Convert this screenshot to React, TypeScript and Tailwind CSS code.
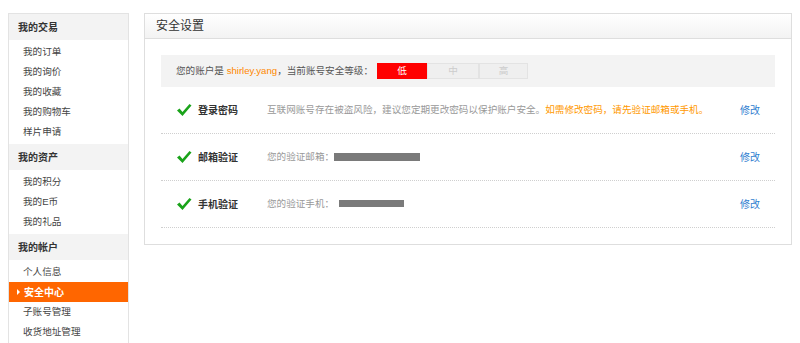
import React from 'react';

const font = { fontFamily: '"Liberation Sans", "Noto Sans CJK SC", sans-serif' };

interface NavGroup {
  title: string;
  items: string[];
}

const groups: NavGroup[] = [
  { title: '我的交易', items: ['我的订单', '我的询价', '我的收藏', '我的购物车', '样片申请'] },
  { title: '我的资产', items: ['我的积分', '我的E币', '我的礼品'] },
  { title: '我的帐户', items: ['个人信息', '安全中心', '子账号管理', '收货地址管理'] },
];

function Check() {
  return (
    <svg width="16" height="14" viewBox="0 0 16 14" className="shrink-0">
      <path d="M1 7.5 L3.5 5.5 L6.5 9 L13.5 1 L15.5 2.5 L6.5 13 Z" fill="#1aa31a" />
    </svg>
  );
}

function Sidebar() {
  return (
    <div className="w-[121px] shrink-0 border border-[#e3e3e3] border-b-0 bg-white">
      {groups.map((g) => (
        <div key={g.title}>
          <div className="h-[26px] bg-[#f3f3f3] pl-[9px] flex items-center text-[10px] font-bold text-[#333]">
            {g.title}
          </div>
          <div className="py-[2px]">
            {g.items.map((item) =>
              item === '安全中心' ? (
                <div
                  key={item}
                  className="h-[20px] bg-[#ff6600] text-white font-bold flex items-center pl-[8px] text-[10px]"
                >
                  <span className="w-0 h-0 border-y-[3px] border-y-transparent border-l-[3px] border-l-white mr-[4px]" />
                  {item}
                </div>
              ) : (
                <div key={item} className="h-[20px] flex items-center pl-[14px] text-[9.6px] text-[#444]">
                  {item}
                </div>
              )
            )}
          </div>
        </div>
      ))}
    </div>
  );
}

interface Row {
  label: string;
  desc: React.ReactNode;
}

const rows: Row[] = [
  {
    label: '登录密码',
    desc: (
      <>
        互联网账号存在被盗风险，建议您定期更改密码以保护账户安全。
        <span className="text-[#ff9900]">如需修改密码，请先验证邮箱或手机。</span>
      </>
    ),
  },
  {
    label: '邮箱验证',
    desc: (
      <span className="flex items-center">
        您的验证邮箱：
        <span className="inline-block w-[86px] h-[8px] bg-[#7a7a7a]" />
      </span>
    ),
  },
  {
    label: '手机验证',
    desc: (
      <span className="flex items-center">
        您的验证手机：
        <span className="inline-block ml-[5px] w-[65px] h-[7px] bg-[#7a7a7a]" />
      </span>
    ),
  },
];

export default function App() {
  return (
    <div style={font} className="w-[800px] h-[343px] bg-white overflow-hidden flex items-start pt-[13px] pl-[8px] gap-[15px]">
      <Sidebar />
      <div className="w-[648px] border border-[#dedede]">
        <div className="h-[25px] bg-gradient-to-b from-white to-[#f3f3f3] border-b border-[#dedede] flex items-center pl-[11px] text-[12px] text-[#333]">
          安全设置
        </div>
        <div className="px-[16px] pt-[16px] pb-[16px]">
          <div className="h-[32px] bg-[#f3f3f3] flex items-center pl-[15px] text-[9.6px] text-[#555]">
            您的账户是&nbsp;<span className="text-[#ff8800]">shirley.yang</span>，当前账号安全等级：
            <div className="flex ml-[4px]">
              <div className="w-[50px] h-[16px] bg-[#ff0000] text-white flex items-center justify-center">低</div>
              <div className="w-[52px] h-[16px] bg-[#efefef] border border-[#e3e3e3] text-[#ccc] flex items-center justify-center">中</div>
              <div className="w-[49px] h-[16px] bg-[#efefef] border border-[#e3e3e3] text-[#ccc] flex items-center justify-center">高</div>
            </div>
          </div>
          {rows.map((r) => (
            <div
              key={r.label}
              className="h-[47px] border-b border-dotted border-[#cfcfcf] flex items-center text-[9.6px]"
            >
              <div className="w-[37px] flex justify-end pr-[6px]">
                <Check />
              </div>
              <div className="w-[69px] font-bold text-[#333] text-[10px]">{r.label}</div>
              <div className="flex-1 text-[#999]">{r.desc}</div>
              <a className="w-[35px] text-[#2f7ed0] text-[10px]">修改</a>
            </div>
          ))}
        </div>
      </div>
    </div>
  );
}
